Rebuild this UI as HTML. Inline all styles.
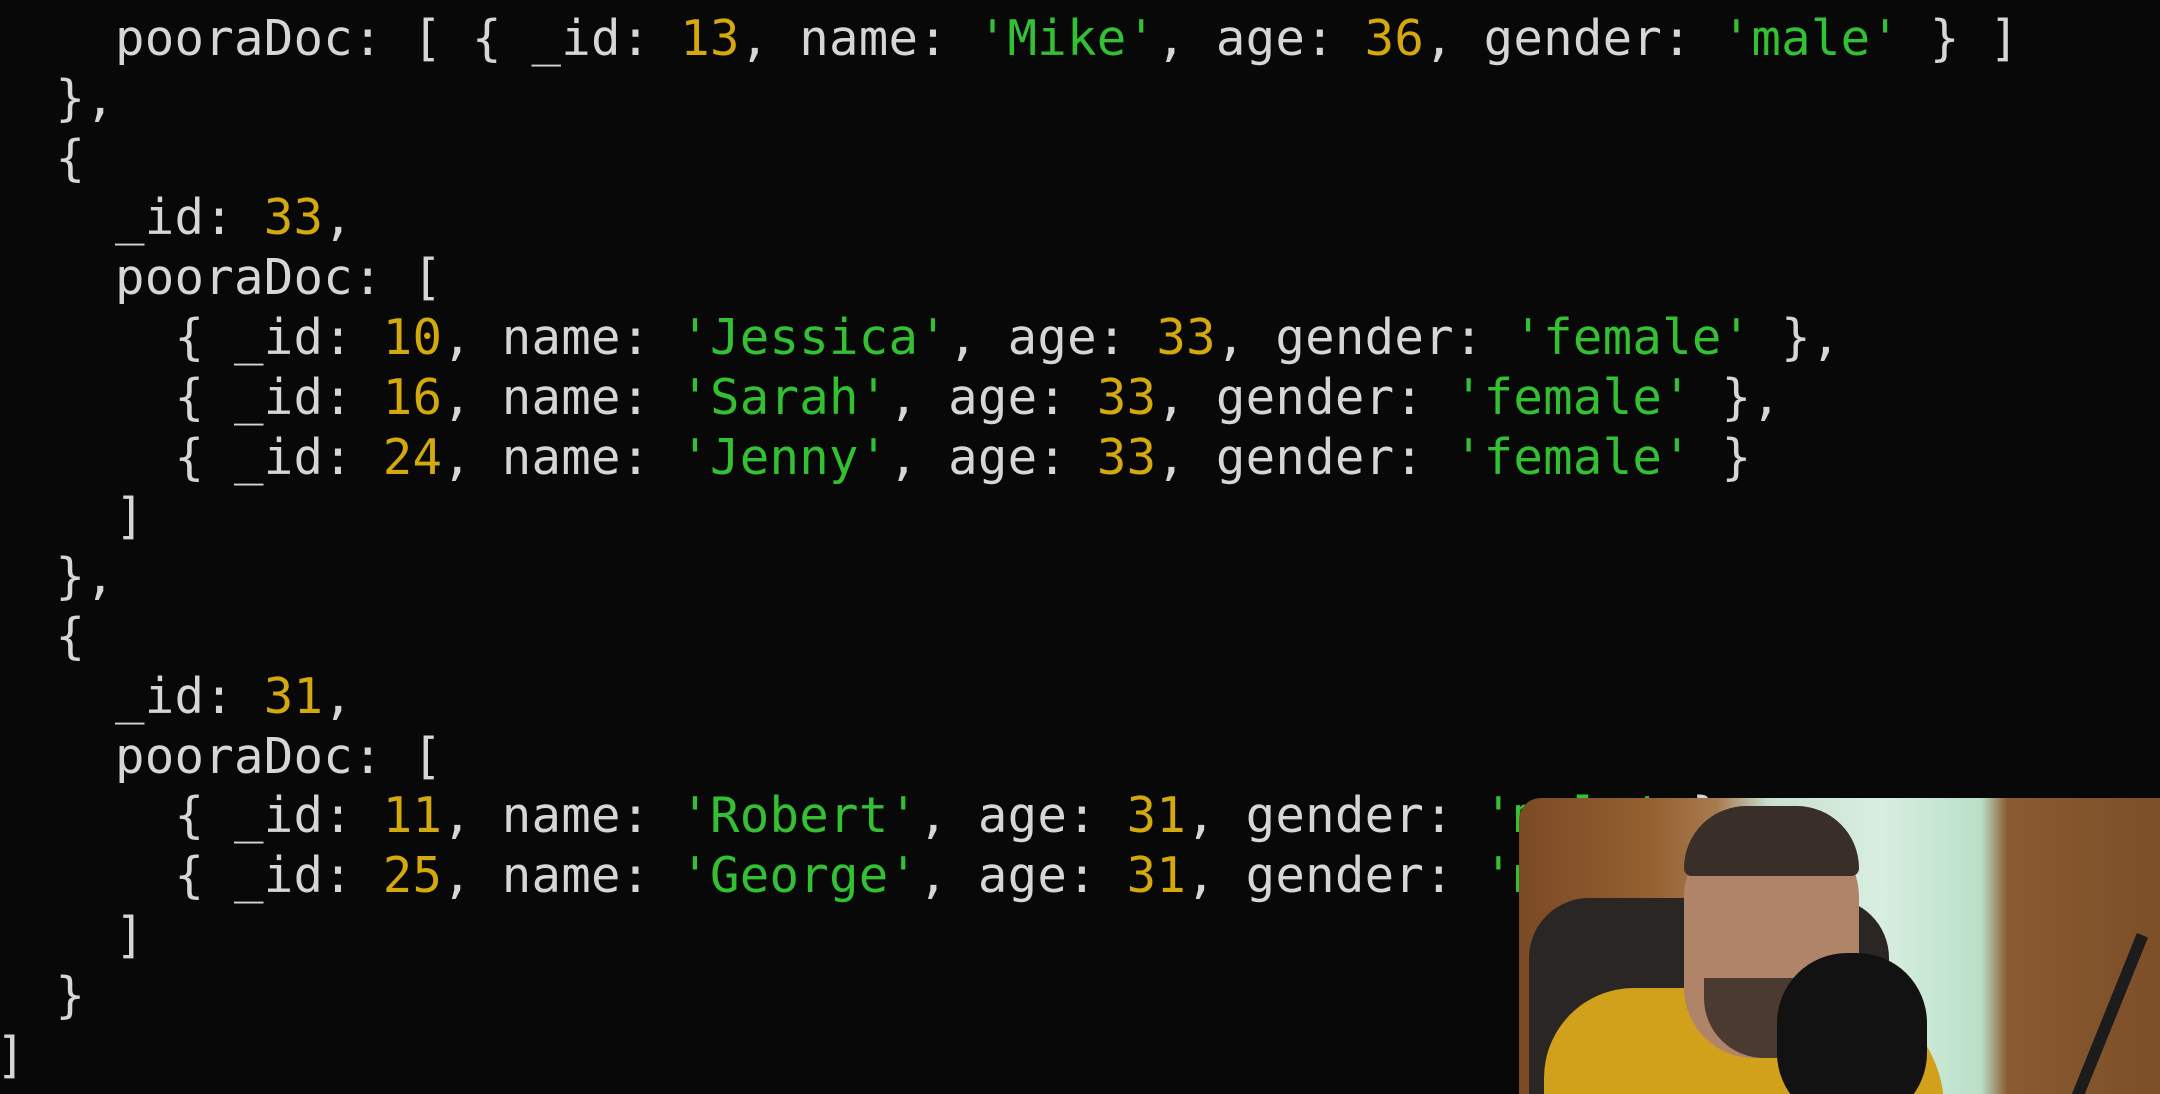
<!DOCTYPE html>
<html><head><meta charset="utf-8"><style>
html,body{margin:0;padding:0;background:#080808;width:2160px;height:1094px;overflow:hidden;position:relative}
.l{position:absolute;left:-4px;font-family:"DejaVu Sans Mono","Liberation Mono",monospace;font-size:49px;letter-spacing:0.25px;line-height:60px;color:#d6d6d6;white-space:pre}
.n{color:#d4a90e}.s{color:#33c133}
.cam{position:absolute;left:1519px;top:798px;width:660px;height:310px;border-radius:22px 0 0 0;overflow:hidden;background:linear-gradient(90deg,#7a4a26 0,#94602f 20%,#a87a50 30%,#c9dfcf 38%,#d8eee0 55%,#b8e0c8 70%,#8a5a30 74%,#7a4e28 100%)}
.cam div{position:absolute}
</style></head><body>
<div class="l" style="top:9px">    pooraDoc: [ { _id: <span class="n">13</span>, name: <span class="s">'Mike'</span>, age: <span class="n">36</span>, gender: <span class="s">'male'</span> } ]</div>
<div class="l" style="top:69px">  },</div>
<div class="l" style="top:129px">  {</div>
<div class="l" style="top:188px">    _id: <span class="n">33</span>,</div>
<div class="l" style="top:248px">    pooraDoc: [</div>
<div class="l" style="top:308px">      { _id: <span class="n">10</span>, name: <span class="s">'Jessica'</span>, age: <span class="n">33</span>, gender: <span class="s">'female'</span> },</div>
<div class="l" style="top:368px">      { _id: <span class="n">16</span>, name: <span class="s">'Sarah'</span>, age: <span class="n">33</span>, gender: <span class="s">'female'</span> },</div>
<div class="l" style="top:428px">      { _id: <span class="n">24</span>, name: <span class="s">'Jenny'</span>, age: <span class="n">33</span>, gender: <span class="s">'female'</span> }</div>
<div class="l" style="top:487px">    ]</div>
<div class="l" style="top:547px">  },</div>
<div class="l" style="top:607px">  {</div>
<div class="l" style="top:667px">    _id: <span class="n">31</span>,</div>
<div class="l" style="top:727px">    pooraDoc: [</div>
<div class="l" style="top:786px">      { _id: <span class="n">11</span>, name: <span class="s">'Robert'</span>, age: <span class="n">31</span>, gender: <span class="s">'male'</span> },</div>
<div class="l" style="top:846px">      { _id: <span class="n">25</span>, name: <span class="s">'George'</span>, age: <span class="n">31</span>, gender: <span class="s">'male'</span> }</div>
<div class="l" style="top:906px">    ]</div>
<div class="l" style="top:966px">  }</div>
<div class="l" style="top:1026px">]</div>
<div class="cam">
  <div style="left:10px;top:100px;width:360px;height:230px;background:#2a2624;border-radius:60px 60px 0 0"></div>
  <div style="left:25px;top:190px;width:400px;height:140px;background:#d2a11c;border-radius:90px 120px 0 0"></div>
  <div style="left:165px;top:20px;width:175px;height:240px;background:#b08468;border-radius:80px 80px 70px 70px"></div>
  <div style="left:165px;top:8px;width:175px;height:70px;background:#3a2e28;border-radius:80px 80px 10px 10px"></div>
  <div style="left:185px;top:180px;width:140px;height:80px;background:#4a3a30;border-radius:0 0 60px 60px"></div>
  <div style="left:258px;top:155px;width:150px;height:170px;background:#121212;border-radius:70px"></div>
  <div style="left:580px;top:130px;width:12px;height:200px;background:#1c1c1c;transform:rotate(22deg)"></div>
</div>
</body></html>
